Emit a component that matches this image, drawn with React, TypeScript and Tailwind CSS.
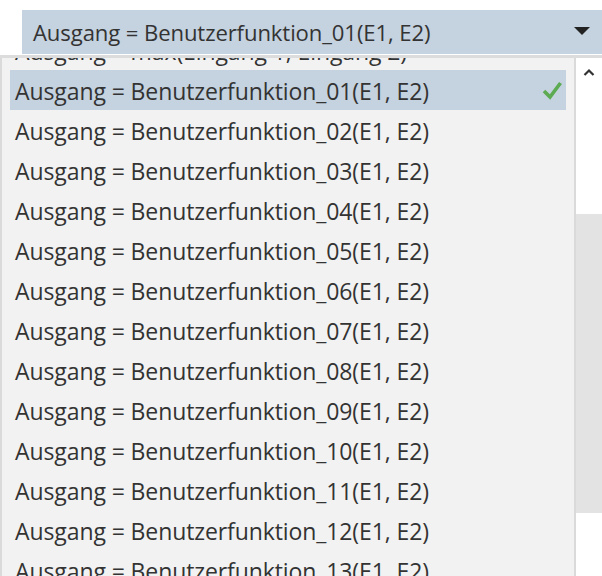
const items = [
  "Ausgang = max(Eingang 1, Eingang 2)",
  ...Array.from({ length: 13 }, (_, i) => `Ausgang = Benutzerfunktion_${String(i + 1).padStart(2, "0")}(E1, E2)`),
];

const App = () => {
  const selected = 1;

  return (
    <div className="w-[602px] h-[576px] bg-white overflow-hidden flex flex-col font-['Open_Sans',sans-serif] text-[#333333]">
      {/* Combobox */}
      <div className="pt-[10px] pl-[22px]">
        <div className="h-[44px] bg-[#c5d2df] flex items-center justify-between pl-[11px] pr-[12px]">
          <span className="text-[22.1px] tracking-[-0.1px] whitespace-nowrap leading-none pt-[1px]">Ausgang = Benutzerfunktion_01(E1, E2)</span>
          <svg width="16" height="8" viewBox="0 0 16 8" className="mt-[-2px]">
            <path d="M0 0 L16 0 L8 8 Z" fill="#222222" />
          </svg>
        </div>
      </div>

      {/* Popup list */}
      <div className="mt-[1px] flex-1 flex border-t-[3px] border-[#dcdcdc] min-h-0">
        <div className="w-[576px] border-l-[2px] border-r-[2px] border-[#dadada] bg-[#f2f2f2] overflow-hidden">
          <div className="mt-[-28px] flex flex-col">
            {items.map((label, i) => (
              <div key={label} className="h-[40px] pl-[8px] pr-[8px]">
                <div
                  className={`h-full flex items-center justify-between pl-[5px] pr-[4px] ${
                    i === selected ? "bg-[#c5d2df]" : ""
                  }`}
                >
                  <span className="text-[23px] tracking-[-0.1px] whitespace-nowrap leading-none pt-[3px]">{label}</span>
                  {i === selected && (
                    <svg width="20" height="20" viewBox="0 0 20 20">
                      <path d="M2 11 L8 17 L18.5 3" stroke="#5cab52" strokeWidth="3.6" fill="none" />
                    </svg>
                  )}
                </div>
              </div>
            ))}
          </div>
        </div>

        {/* Scrollbar */}
        <div className="w-[26px] flex flex-col bg-white">
          <div className="h-[156px] flex justify-center pt-[10px]">
            <svg width="12" height="8" viewBox="0 0 12 8">
              <path d="M1.5 7 L6 2.5 L10.5 7" stroke="#333333" strokeWidth="2.2" fill="none" />
            </svg>
          </div>
          <div className="h-[299px] bg-[#e3e3e3]" />
        </div>
      </div>
    </div>
  );
};

export default App;
